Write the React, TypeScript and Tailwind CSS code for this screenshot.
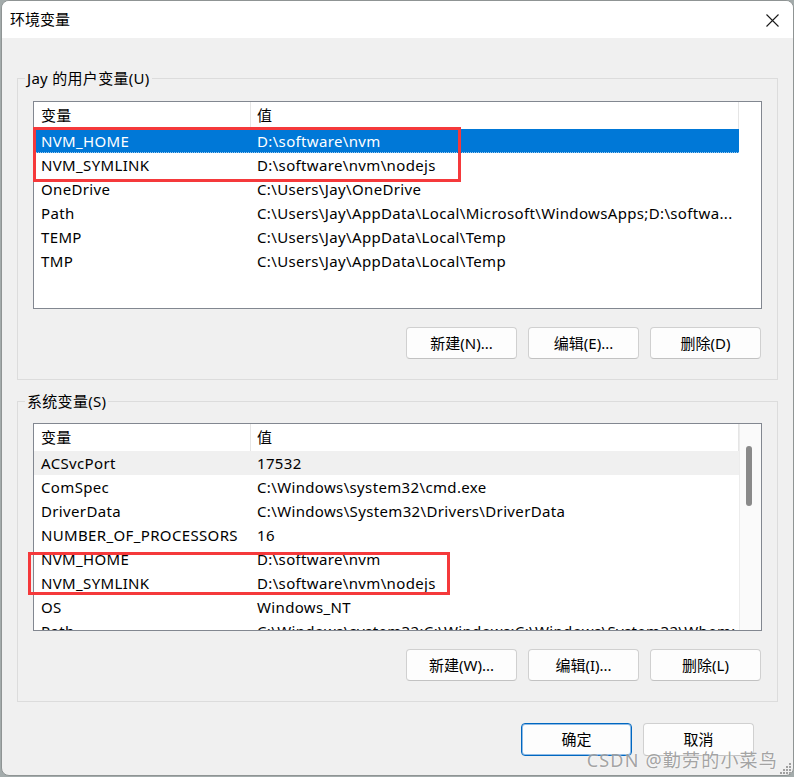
import React from "react";

type Row = { name: string; value: string };

const userVars: Row[] = [
  { name: "NVM_HOME", value: "D:\\software\\nvm" },
  { name: "NVM_SYMLINK", value: "D:\\software\\nvm\\nodejs" },
  { name: "OneDrive", value: "C:\\Users\\Jay\\OneDrive" },
  { name: "Path", value: "C:\\Users\\Jay\\AppData\\Local\\Microsoft\\WindowsApps;D:\\softwa..." },
  { name: "TEMP", value: "C:\\Users\\Jay\\AppData\\Local\\Temp" },
  { name: "TMP", value: "C:\\Users\\Jay\\AppData\\Local\\Temp" },
];

const systemVars: Row[] = [
  { name: "ACSvcPort", value: "17532" },
  { name: "ComSpec", value: "C:\\Windows\\system32\\cmd.exe" },
  { name: "DriverData", value: "C:\\Windows\\System32\\Drivers\\DriverData" },
  { name: "NUMBER_OF_PROCESSORS", value: "16" },
  { name: "NVM_HOME", value: "D:\\software\\nvm" },
  { name: "NVM_SYMLINK", value: "D:\\software\\nvm\\nodejs" },
  { name: "OS", value: "Windows_NT" },
  { name: "Path", value: "C:\\Windows\\system32;C:\\Windows;C:\\Windows\\System32\\Wbem;..." },
];

const font = "font-['Microsoft_YaHei_UI','Noto_Sans','Noto_Sans_CJK_SC',sans-serif]";

const Button = ({ label }: { label: string }) => (
  <button className="h-[32px] w-[111px] rounded-[4px] border border-[#d0d0d0] border-b-[#c2c2c2] bg-[#fdfdfd] text-[15px] text-black">
    {label}
  </button>
);

const VarList = ({
  rows,
  selected,
  hovered,
  scrollbar,
  children,
}: {
  rows: Row[];
  selected?: number;
  hovered?: number;
  scrollbar?: boolean;
  children?: React.ReactNode;
}) => (
  <div className="relative flex h-[208px] w-[729px] border border-[#828790] bg-white">
    <div className="h-full w-[705px] overflow-hidden tracking-[0.35px]">
      <div className="flex h-[27px] items-center text-[15px] text-black">
        <div className="h-full w-[217px] shrink-0 border-r border-[#e5e5e5] pl-[7px] leading-[27px]">变量</div>
        <div className="h-full flex-1 border-r border-[#e5e5e5] pl-[6px] leading-[27px]">值</div>
      </div>
      {rows.map((r, i) => {
        const sel = i === selected;
        const hov = i === hovered;
        return (
          <div
            key={r.name}
            className={`flex h-[24px] items-center whitespace-nowrap text-[15px] leading-[24px] ${
              sel ? "border-b border-dotted border-[#99c9ef] bg-[#0078d7] text-white" : hov ? "bg-[#f0f0f0] text-black" : "text-black"
            }`}
          >
            <div className="w-[217px] shrink-0 pl-[7px]">{r.name}</div>
            <div className="min-w-0 flex-1 overflow-hidden pl-[6px]">{r.value}</div>
          </div>
        );
      })}
    </div>
    {scrollbar ? (
      <div className="relative h-full w-[22px] border-l border-[#ececec] bg-[#fafafa]">
        <div className="absolute left-[6px] top-[22px] h-[60px] w-[6px] rounded-full bg-[#8a8a8a]" />
      </div>
    ) : (
      <div className="h-full w-[22px]" />
    )}
    {children}
  </div>
);

const Group = ({ title, top, children }: { title: string; top: string; children: React.ReactNode }) => (
  <div className={`relative border border-[#dcdcdc] px-[15px] pb-[20px] ${top}`}>
    <span className="absolute -top-[12px] left-[7px] bg-[#f0f0f0] px-[2px] text-[15px] leading-[22px] tracking-[0.3px] text-black">
      {title}
    </span>
    {children}
  </div>
);

export default function App() {
  return (
    <div className={`h-[777px] w-[794px] bg-[#a3abab] pl-[1px] ${font}`}>
      <div className="relative h-[776px] w-[793px] overflow-hidden rounded-[8px] border border-[#8f9494] bg-[#f0f0f0]">
        {/* title bar */}
        <div className="flex h-[37px] items-center justify-between bg-white pl-[8px] pr-[14px]">
          <span className="text-[15px] text-black">环境变量</span>
          <svg width="13" height="13" viewBox="0 0 13 13" className="mt-[1px]">
            <path d="M0.5 0.5L12.5 12.5M12.5 0.5L0.5 12.5" stroke="#1a1a1a" strokeWidth="1.1" />
          </svg>
        </div>

        <div className="px-[15px] pt-[40px]">
          <Group title="Jay 的用户变量(U)" top="pt-[22px]">
            <VarList rows={userVars} selected={0}>
              <div className="absolute left-[-1px] top-[25px] h-[55px] w-[428px] border-[3px] border-[#f5393b]" />
            </VarList>
            <div className="mr-[1px] mt-[18px] flex justify-end gap-[11px]">
              <Button label="新建(N)..." />
              <Button label="编辑(E)..." />
              <Button label="删除(D)" />
            </div>
          </Group>

          <Group title="系统变量(S)" top="mt-[21px] pt-[21px]">
            <VarList rows={systemVars} hovered={0} scrollbar>
              <div className="absolute left-[-6px] top-[128px] h-[43px] w-[422px] border-[3px] border-[#f5393b]" />
            </VarList>
            <div className="mr-[1px] mt-[18px] flex justify-end gap-[11px]">
              <Button label="新建(W)..." />
              <Button label="编辑(I)..." />
              <Button label="删除(L)" />
            </div>
          </Group>

          <div className="mr-[24px] mt-[21px] flex justify-end gap-[11px]">
            <button className="h-[33px] w-[111px] rounded-[4px] border border-[#0067c0] bg-[#fdfdfd] text-[15px] text-black shadow-[inset_0_0_0_1px_#8fbbe6]">
              确定
            </button>
            <button className="h-[33px] w-[111px] rounded-[4px] border border-[#d0d0d0] border-b-[#c2c2c2] bg-[#fdfdfd] text-[15px] text-black">
              取消
            </button>
          </div>
        </div>

        {/* watermark */}
        <div className="absolute bottom-[6px] right-[15px] text-[18px] leading-none tracking-[1.2px] text-[#8c8c8c]/80 [text-shadow:0_0_2px_#ffffff]">
          CSDN @勤劳的小菜鸟
        </div>

        {/* resize grip */}
        <svg width="12" height="12" viewBox="0 0 12 12" className="absolute bottom-[1px] right-[1px]">
          {[
            [9, 1], [9, 4], [6, 4], [9, 7], [6, 7], [3, 7], [9, 10], [6, 10], [3, 10], [0, 10],
          ].map(([x, y], i) => (
            <rect key={i} x={x} y={y} width="2" height="2" fill="#a0a0a0" />
          ))}
        </svg>
      </div>
    </div>
  );
}
